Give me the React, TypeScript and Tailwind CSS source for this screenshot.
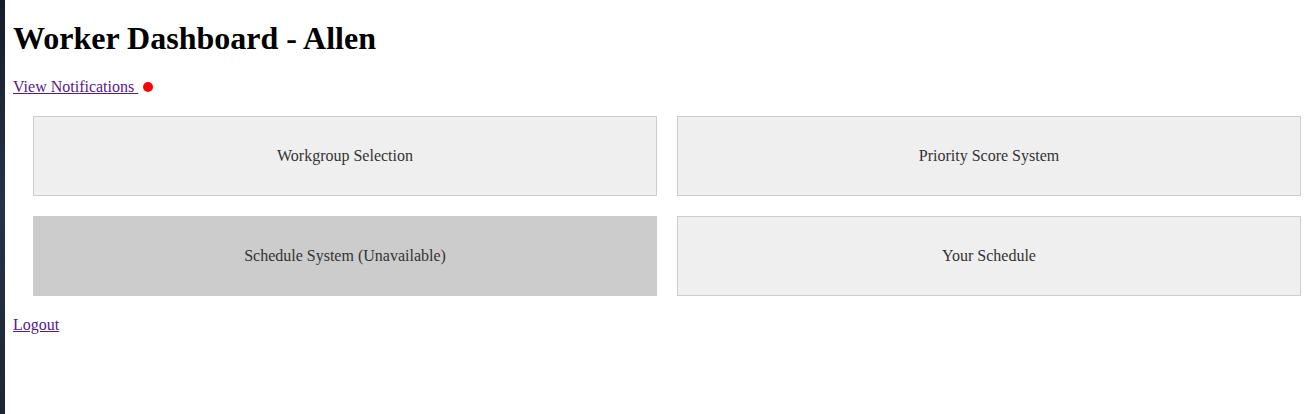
export default function App() {
  const items = [
    { label: 'Workgroup Selection', disabled: false },
    { label: 'Priority Score System', disabled: false },
    { label: 'Schedule System (Unavailable)', disabled: true },
    { label: 'Your Schedule', disabled: false },
  ]

  return (
    <div className="flex min-h-[414px] bg-white font-['Liberation_Serif',serif] text-black">
      <div className="w-[5px] shrink-0 bg-gradient-to-b from-[#161d2a] via-[#253349] to-[#1d2532]"></div>
      <div className="flex-1 px-2">
        <h1 className="mt-[20px] text-[32px] font-bold leading-[37px]">Worker Dashboard - Allen</h1>
        <div className="mt-[21px] flex items-center leading-[18px]">
          <a href="#" className="text-[#551a8b] underline">
            View Notifications{'\u00a0'}
          </a>
          <span className="ml-[5px] inline-block h-[10px] w-[10px] rounded-full bg-[#ff0000]"></span>
        </div>

        {/* Menu */}
        <div className="mt-[20px] grid w-[1288px] grid-cols-2 gap-5 pl-5">
          {items.map((item) => (
            <button
              key={item.label}
              className={
                item.disabled
                  ? 'h-[80px] bg-[#cccccc] text-[16px] text-[#333333]'
                  : 'h-[80px] border border-[#cccccc] bg-[#efefef] text-[16px] text-[#333333]'
              }
            >
              {item.label}
            </button>
          ))}
        </div>

        <div className="mt-[20px] leading-[18px]">
          <a href="#" className="text-[#551a8b] underline">
            Logout
          </a>
        </div>
      </div>
    </div>
  )
}
